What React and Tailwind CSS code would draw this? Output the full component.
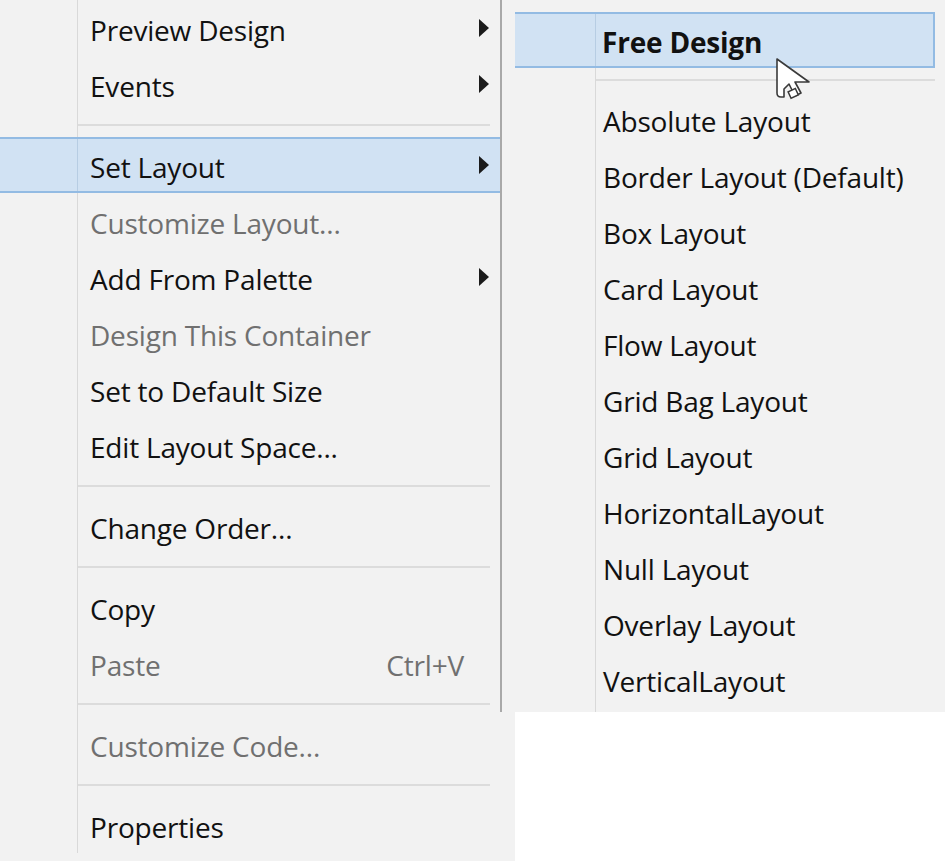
import React from 'react';

const leftItems = [
  { label: 'Preview Design', sub: true },
  { label: 'Events', sub: true },
  { sep: true },
  { label: 'Set Layout', sub: true, active: true },
  { label: 'Customize Layout...', disabled: true },
  { label: 'Add From Palette', sub: true },
  { label: 'Design This Container', disabled: true },
  { label: 'Set to Default Size' },
  { label: 'Edit Layout Space...' },
  { sep: true },
  { label: 'Change Order...' },
  { sep: true },
  { label: 'Copy' },
  { label: 'Paste', disabled: true, shortcut: 'Ctrl+V' },
  { sep: true },
  { label: 'Customize Code...', disabled: true },
  { sep: true },
  { label: 'Properties' },
];

const layouts = [
  'Absolute Layout',
  'Border Layout (Default)',
  'Box Layout',
  'Card Layout',
  'Flow Layout',
  'Grid Bag Layout',
  'Grid Layout',
  'HorizontalLayout',
  'Null Layout',
  'Overlay Layout',
  'VerticalLayout',
];

function SubArrow() {
  return (
    <svg width="10" height="18" viewBox="0 0 10 18" className="shrink-0">
      <polygon points="0,0 10,9 0,18" fill="#1b1b1b" />
    </svg>
  );
}

function Cursor() {
  return (
    <svg
      width="40"
      height="48"
      viewBox="0 0 40 48"
      className="absolute left-[775px] top-[57px] pointer-events-none"
    >
      <path
        d="M2 2 L2 36 Q2 40 6 40 L9 40 L9 32 L14 27 L20 39 L26 36 L20 25 L34 25 Z"
        fill="#ffffff"
        stroke="#3a3a3a"
        strokeWidth="1.6"
        strokeLinejoin="round"
      />
      <rect
        x="14"
        y="33"
        width="8"
        height="7"
        fill="#ffffff"
        stroke="#3a3a3a"
        strokeWidth="1.5"
        transform="rotate(-25 18 36)"
      />
    </svg>
  );
}

export default function App() {
  return (
    <div
      className="relative w-[945px] h-[861px] overflow-hidden bg-white flex text-[28px] tracking-[-0.2px] text-[#111]"
      style={{ fontFamily: '"Open Sans", "Noto Sans", sans-serif' }}
    >
      {/* Main context menu */}
      <div className="relative w-[515px] h-full bg-[#f2f2f2] shrink-0">
        <div className="absolute left-[500px] top-0 w-[2px] h-[712px] bg-[#a9a9a9]" />
        <div className="w-[500px] flex flex-col">
          {leftItems.map((item, i) =>
            item.sep ? (
              <div key={i} className="flex h-[25px]">
                <div className="w-[78px] border-r border-[#d9d9d9]" />
                <div className="flex-1 flex items-center pr-[10px]">
                  <div className="h-[2px] w-full bg-[#dcdcdc]" />
                </div>
              </div>
            ) : (
              <div
                key={i}
                className={
                  item.active
                    ? 'flex items-center h-[56px] bg-[#d1e2f3] border-y-2 border-[#93bbe3]'
                    : 'flex items-center h-[56px]'
                }
              >
                <div
                  className={
                    item.active
                      ? 'w-[78px] h-full border-r border-[#b7cde3]'
                      : 'w-[78px] h-full border-r border-[#d9d9d9]'
                  }
                />
                <div
                  className={
                    item.disabled
                      ? 'flex-1 flex items-center pl-[12px] pr-[11px] text-[#707070] leading-none'
                      : 'flex-1 flex items-center pl-[12px] pr-[11px] leading-none'
                  }
                >
                  <span className="whitespace-nowrap pt-[3px]">{item.label}</span>
                  {item.shortcut && (
                    <span className="ml-auto mr-[25px] whitespace-nowrap pt-[3px]">{item.shortcut}</span>
                  )}
                  {item.sub && (
                    <span className="ml-auto flex items-center">
                      <SubArrow />
                    </span>
                  )}
                </div>
              </div>
            )
          )}
        </div>
      </div>

      {/* Layout submenu */}
      <div className="flex-1 flex flex-col -ml-[4px]">
        <div className="h-[712px] bg-[#f2f2f2] pt-[12px] flex flex-col">
          <div className="flex items-center h-[56px] mr-[10px] bg-[#d1e2f3] border-2 border-[#93bbe3]">
            <div className="w-[83px] h-full border-r border-[#b7cde3]" />
            <span className="pl-[6px] pt-[3px] font-bold leading-none whitespace-nowrap">Free Design</span>
          </div>
          <div className="flex h-[23px]">
            <div className="w-[85px] border-r border-[#d9d9d9]" />
            <div className="flex-1 flex items-center pr-[10px]">
              <div className="h-[2px] w-full bg-[#dcdcdc]" />
            </div>
          </div>
          {layouts.map((l) => (
            <div key={l} className="flex items-center h-[56px]">
              <div className="w-[85px] h-full border-r border-[#d9d9d9]" />
              <span className="pl-[7px] pt-[3px] leading-none whitespace-nowrap">{l}</span>
            </div>
          ))}
          <div className="flex flex-1">
            <div className="w-[85px] border-r border-[#d9d9d9]" />
          </div>
        </div>
        <div className="flex-1 bg-white" />
      </div>

      <Cursor />
    </div>
  );
}
